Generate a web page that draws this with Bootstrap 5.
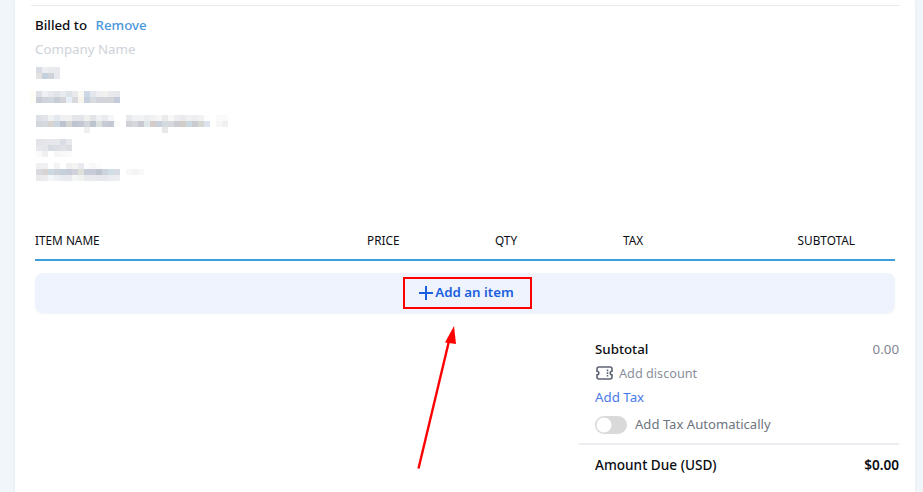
<!DOCTYPE html>
<html lang="en">
<head>
<meta charset="utf-8">
<title>Invoice</title>
<link href="https://cdn.jsdelivr.net/npm/bootstrap@5.3.0/dist/css/bootstrap.min.css" rel="stylesheet">
<style>
html,body{height:492px;overflow:hidden}
body{background:#f1f6fa;font-family:"Noto Sans",sans-serif;font-size:13.3px;color:#0b0d12;position:relative}
.sheet{margin:0 8px 0 15px;background:#fff;height:492px;padding:5px 20px 0 20px;box-shadow:0 0 3px rgba(40,60,90,.08)}
.top-rule{height:1px;background:#e8eaed;margin:0 0 0 -4px;width:869px}
.billed{margin-top:10px;line-height:18px;height:18px}
.remove-link{color:#4a97dc;text-decoration:none;margin-left:5px;font-weight:500}
.company{margin-top:6px;line-height:18px;color:#ced2da}
.mosaic{display:block;margin:4px 0 0 -5px}
.mosaic rect{width:6px;height:6px}
.head-row{display:grid;grid-template-columns:332px 128px 128px 176px 96px;margin-top:48px;height:29px;font-size:11.8px;line-height:16px;border-bottom:2px solid #3c9fdb;width:860px}
.head-row .end{text-align:right;padding-right:40px;white-space:nowrap;margin-left:-60px}
.add-band{margin-top:12px;width:860px;height:40px;background:#eff3fd;border-radius:8px;box-shadow:0 1px 2px rgba(60,80,120,.06);color:#1a5fe0;font-weight:600;font-size:13.3px;padding-left:2px}
.add-band svg{margin-right:1px}
.totals{width:320px;margin:24px 0 0 544px}
.tot-inner{padding-left:16px}
.tot-row{height:24px;line-height:24px}
.muted-val{color:#7f8591}
.disc{color:#8a8f9a;gap:6px;font-size:12.7px}
.disc svg{margin-left:1px}
.tax-link{color:#4a78ea;text-decoration:none}
.form-check-input.auto-toggle{width:32px;height:18px;margin:0;float:none;background-color:#d9d9d9;border:0;box-shadow:none;background-image:url("data:image/svg+xml,%3csvg xmlns='http://www.w3.org/2000/svg' viewBox='0 0 32 18'%3e%3ccircle cx='9' cy='9' r='7.5' fill='%23fff'/%3e%3c/svg%3e");background-size:32px 18px;background-position:left center}
.form-switch.auto-wrap{padding-left:0;min-height:0;margin:0}
.auto-label{color:#6e7480;font-size:13.1px}
.auto-row{margin-top:6px;height:20px;gap:8px}
.due-rule{height:2px;background:#ececf1;margin-top:8px}
.due-row{margin-top:9px;line-height:22px;font-weight:500;font-size:13.6px}
.mark-box{position:absolute;left:403px;top:277px;width:129px;height:32px;border:2px solid #f00}
.mark-arrow{position:absolute;left:410px;top:320px}
</style>
</head>
<body>
<main class="sheet">
  <div class="top-rule"></div>
  <div class="billed"><span class="fw-medium">Billed to</span> <a href="#" class="remove-link">Remove</a></div>
  <div class="company">Company Name</div>
  <svg class="mosaic" width="200" height="122" viewBox="30 62 200 122" aria-hidden="true">
    <g>
      <rect x="36" y="67" fill="#d8dbe3"/><rect x="42" y="67" fill="#eceef1"/><rect x="48" y="67" fill="#e8eaee"/><rect x="54" y="67" fill="#e8eaee"/>
      <rect x="36" y="73" fill="#e4e2e0"/><rect x="42" y="73" fill="#c5d0dd"/><rect x="48" y="73" fill="#cfd3da"/><rect x="54" y="73" fill="#e6e8ec"/>
    </g>
    <g>
      <rect x="36" y="91" fill="#dcdfe6"/><rect x="42" y="91" fill="#eeeff2"/><rect x="48" y="91" fill="#e8e9ee"/><rect x="54" y="91" fill="#e2e4ea"/><rect x="60" y="91" fill="#e9ecee"/><rect x="66" y="91" fill="#dbe2e8"/><rect x="72" y="91" fill="#e8eaee"/><rect x="78" y="91" fill="#faf8f2"/><rect x="84" y="91" fill="#ccd8e6"/><rect x="90" y="91" fill="#e4e8ee"/><rect x="96" y="91" fill="#eceef2"/><rect x="102" y="91" fill="#f0f0ee"/><rect x="108" y="91" fill="#e8eaee"/><rect x="114" y="91" fill="#e6e8ec"/>
      <rect x="36" y="97" fill="#c8ccd6"/><rect x="42" y="97" fill="#d0d3dc"/><rect x="48" y="97" fill="#d0d6de"/><rect x="54" y="97" fill="#c8ccd4"/><rect x="60" y="97" fill="#d2d4da"/><rect x="66" y="97" fill="#e6f0f6"/><rect x="72" y="97" fill="#d8dade"/><rect x="78" y="97" fill="#f8f4ee"/><rect x="84" y="97" fill="#c4d0de"/><rect x="90" y="97" fill="#d8dce0"/><rect x="96" y="97" fill="#d2d4dc"/><rect x="102" y="97" fill="#d2d4da"/><rect x="108" y="97" fill="#d2d4d8"/><rect x="114" y="97" fill="#c4ccdc"/>
      <rect x="30" y="91" fill="#fdfdf5"/><rect x="30" y="97" fill="#fdfdf5"/>
    </g>
    <g>
      <rect x="36" y="115" fill="#dde0e6"/><rect x="42" y="115" fill="#e2e4ea"/><rect x="48" y="115" fill="#f0f1f2"/><rect x="54" y="115" fill="#e2e8ee"/><rect x="60" y="115" fill="#eef0f2"/><rect x="66" y="115" fill="#f0f0ee"/><rect x="72" y="115" fill="#e4e6ea"/><rect x="78" y="115" fill="#e4e5ea"/><rect x="84" y="115" fill="#eef0ee"/><rect x="90" y="115" fill="#e2e4e8"/><rect x="96" y="115" fill="#f0f1f4"/><rect x="102" y="115" fill="#e8eaee"/><rect x="108" y="115" fill="#f4f6f8"/>
      <rect x="36" y="121" fill="#d4d6de"/><rect x="42" y="121" fill="#d6dade"/><rect x="48" y="121" fill="#d8d4d2"/><rect x="54" y="121" fill="#ccd6e0"/><rect x="60" y="121" fill="#bcc2ce"/><rect x="66" y="121" fill="#d4d4d2"/><rect x="72" y="121" fill="#bec4d2"/><rect x="78" y="121" fill="#c4c8d2"/><rect x="84" y="121" fill="#d2d6da"/><rect x="90" y="121" fill="#bcc4ce"/><rect x="96" y="121" fill="#dce0de"/><rect x="102" y="121" fill="#c8ccd6"/><rect x="108" y="121" fill="#c4c8d4"/><rect x="114" y="121" fill="#fafafa"/>
      <rect x="84" y="127" fill="#efeff1"/>
      <rect x="126" y="115" fill="#e8e9ec"/><rect x="132" y="115" fill="#f0f1f2"/><rect x="138" y="115" fill="#f2f3f4"/><rect x="144" y="115" fill="#eceef0"/><rect x="150" y="115" fill="#f0f1f2"/><rect x="156" y="115" fill="#f6f6f6"/><rect x="162" y="115" fill="#e8eaec"/><rect x="168" y="115" fill="#f8f8f8"/><rect x="174" y="115" fill="#eeeef2"/><rect x="180" y="115" fill="#e8eaee"/><rect x="186" y="115" fill="#f0f0f2"/><rect x="192" y="115" fill="#eeeef0"/><rect x="198" y="115" fill="#f2f2f4"/><rect x="204" y="115" fill="#fcfdfd"/><rect x="216" y="115" fill="#fafafa"/><rect x="222" y="115" fill="#fafafa"/>
      <rect x="126" y="121" fill="#d0d2d8"/><rect x="132" y="121" fill="#d6d8dc"/><rect x="138" y="121" fill="#c8cad2"/><rect x="144" y="121" fill="#dfe6ea"/><rect x="150" y="121" fill="#d4ccca"/><rect x="156" y="121" fill="#c8d0dc"/><rect x="162" y="121" fill="#d4dade"/><rect x="168" y="121" fill="#d4d8dc"/><rect x="174" y="121" fill="#ccccd0"/><rect x="180" y="121" fill="#d0ccc8"/><rect x="186" y="121" fill="#ccd8e0"/><rect x="192" y="121" fill="#c8ccd0"/><rect x="198" y="121" fill="#d6d6d2"/><rect x="204" y="121" fill="#dde3ee"/><rect x="216" y="121" fill="#f6f6f6"/><rect x="222" y="121" fill="#f0f0f0"/>
      <rect x="162" y="127" fill="#e8e8ea"/>
    </g>
    <g>
      <rect x="36" y="139" fill="#e4e4e8"/><rect x="42" y="139" fill="#e6e6ea"/><rect x="48" y="139" fill="#e6e6ec"/><rect x="54" y="139" fill="#e6e8ec"/><rect x="60" y="139" fill="#dadce6"/><rect x="66" y="139" fill="#e6e8ec"/>
      <rect x="36" y="145" fill="#e6e8ec"/><rect x="42" y="145" fill="#e4e6ea"/><rect x="48" y="145" fill="#d8dce2"/><rect x="54" y="145" fill="#dcdee6"/><rect x="60" y="145" fill="#e0e2e6"/><rect x="66" y="145" fill="#dcdee4"/>
      <rect x="36" y="151" fill="#fafafa"/><rect x="42" y="151" fill="#f0f0f0"/><rect x="54" y="151" fill="#f6f6f6"/><rect x="60" y="151" fill="#f8f8f8"/><rect x="66" y="151" fill="#fafafa"/>
    </g>
    <g>
      <rect x="36" y="163" fill="#f0f0f2"/><rect x="42" y="163" fill="#f0f0f2"/><rect x="54" y="163" fill="#f4f4f6"/><rect x="66" y="163" fill="#f0f0f2"/><rect x="72" y="163" fill="#f4f4f4"/><rect x="78" y="163" fill="#e8eaf0"/><rect x="84" y="163" fill="#fcfcfc"/><rect x="90" y="163" fill="#f8f8f8"/><rect x="96" y="163" fill="#fcfcfc"/>
      <rect x="36" y="169" fill="#d8dade"/><rect x="42" y="169" fill="#d8d4d4"/><rect x="48" y="169" fill="#ccd8e0"/><rect x="54" y="169" fill="#cdd2da"/><rect x="60" y="169" fill="#c4d0dc"/><rect x="66" y="169" fill="#c8ccd8"/><rect x="72" y="169" fill="#cfd2da"/><rect x="78" y="169" fill="#dee0da"/><rect x="84" y="169" fill="#c8ccd8"/><rect x="90" y="169" fill="#c8ccd8"/><rect x="96" y="169" fill="#c0c4d0"/><rect x="102" y="169" fill="#ccd4de"/><rect x="108" y="169" fill="#d2dee6"/><rect x="114" y="169" fill="#d8dce2"/>
      <rect x="126" y="169" fill="#f8f8f8"/><rect x="132" y="169" fill="#f4f4f4"/><rect x="138" y="169" fill="#f8f8f8"/>
      <rect x="36" y="175" fill="#eaeaec"/><rect x="42" y="175" fill="#eaecee"/><rect x="48" y="175" fill="#f2f6f8"/><rect x="54" y="175" fill="#ecf0f4"/><rect x="60" y="175" fill="#e8ecf0"/><rect x="66" y="175" fill="#e8eaf0"/><rect x="72" y="175" fill="#f4f6f6"/><rect x="78" y="175" fill="#f0f2f0"/><rect x="84" y="175" fill="#e8eaee"/><rect x="90" y="175" fill="#e8eaee"/><rect x="96" y="175" fill="#e6e8ee"/><rect x="102" y="175" fill="#e6e8ee"/><rect x="108" y="175" fill="#eaecf0"/><rect x="114" y="175" fill="#eceef2"/>
    </g>
  </svg>
  <div class="head-row">
    <div>ITEM NAME</div><div>PRICE</div><div>QTY</div><div>TAX</div><div class="end">SUBTOTAL</div>
  </div>
  <div class="add-band d-flex align-items-center justify-content-center">
    <svg width="16" height="16" viewBox="0 0 16 16" aria-hidden="true"><path d="M8 1v14M1 8h14" stroke="#1a5fe0" stroke-width="2" fill="none"/></svg>
    <span>Add an item</span>
  </div>
  <section class="totals">
    <div class="tot-inner">
      <div class="tot-row d-flex justify-content-between"><span class="fw-medium">Subtotal</span><span class="muted-val">0.00</span></div>
      <div class="tot-row d-flex align-items-center disc">
        <svg width="17" height="14" viewBox="0 0 17 14" aria-hidden="true"><path d="M3 1h11a2 2 0 0 1 2 2v2.200a1.800 1.800 0 0 0 0 3.600V11a2 2 0 0 1-2 2H3a2 2 0 0 1-2-2V8.800a1.800 1.800 0 0 0 0-3.600V3a2 2 0 0 1 2-2z" fill="none" stroke="#5d6472" stroke-width="1.600"/><path d="M11.500 3.500v1.700M11.500 6.200v1.700M11.500 8.900v1.700" stroke="#5d6472" stroke-width="1.600"/></svg>
        <span>Add discount</span>
      </div>
      <div class="tot-row"><a href="#" class="tax-link">Add Tax</a></div>
      <div class="auto-row d-flex align-items-center">
        <div class="form-check form-switch auto-wrap d-flex"><input class="form-check-input auto-toggle" type="checkbox" role="switch" aria-label="Add Tax Automatically"></div>
        <span class="auto-label">Add Tax Automatically</span>
      </div>
    </div>
    <div class="due-rule"></div>
    <div class="tot-inner due-row d-flex justify-content-between"><span>Amount Due (USD)</span><span class="fw-semibold">$0.00</span></div>
  </section>
</main>
<div class="mark-box"></div>
<svg class="mark-arrow" width="56" height="156" viewBox="410 320 56 156" aria-hidden="true">
  <path d="M418.500 468.500L449 341" stroke="#f00" stroke-width="2.400" fill="none"/>
  <path d="M454 326L456 344L445 342.500z" fill="#f00"/>
</svg>
<script src="https://cdn.jsdelivr.net/npm/bootstrap@5.3.0/dist/js/bootstrap.bundle.min.js"></script>
</body>
</html>
